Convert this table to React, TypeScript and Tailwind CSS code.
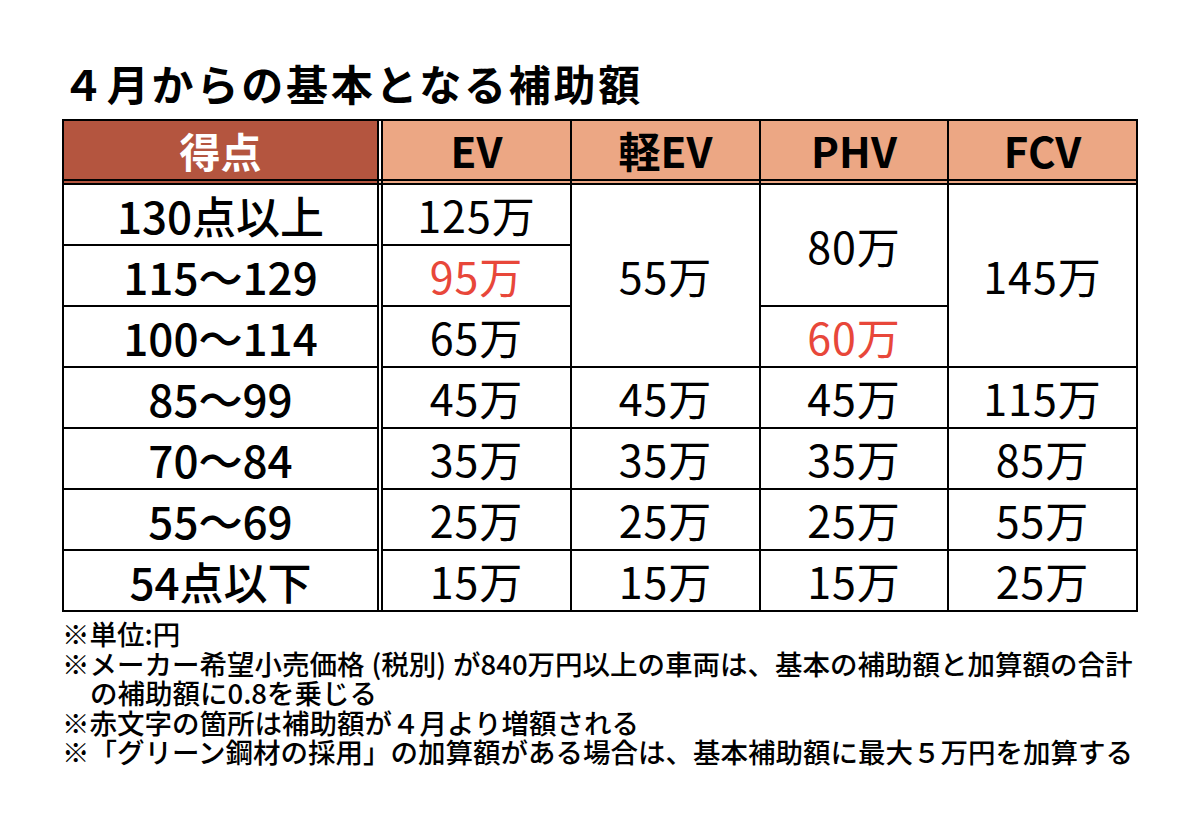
const cell = "bg-white flex items-center justify-center";
const val = "text-[43px] leading-none tracking-[1px] text-black";
const red = "text-[43px] leading-none tracking-[1px] text-[#e8473a]";
const label = "text-[44px] leading-none font-medium text-black";

const simpleRows = [
  { label: "85〜99", ev: "45万", kei: "45万", phv: "45万", fcv: "115万" },
  { label: "70〜84", ev: "35万", kei: "35万", phv: "35万", fcv: "85万" },
  { label: "55〜69", ev: "25万", kei: "25万", phv: "25万", fcv: "55万" },
  { label: "54点以下", ev: "15万", kei: "15万", phv: "15万", fcv: "25万" },
];

export default function App() {
  return (
    <div className="w-[1201px] h-[828px] bg-white pt-[62px] pl-[62px] font-['Noto_Sans_CJK_JP',sans-serif] text-black">
      {/* Title */}
      <h1 className="h-[42px] text-[42px] leading-[42px] font-bold tracking-[2.8px] mb-[15px] whitespace-nowrap">
        ４月からの基本となる補助額
      </h1>

      {/* Table */}
      <div className="w-[1076px] bg-black p-[2px] grid gap-[2px] grid-cols-[313px_2px_187px_187px_186px_187px] grid-rows-[58px_2px_repeat(7,59px)]">
        {/* header */}
        <div className="bg-[#b4553f] flex items-center justify-center text-white text-[41px] font-bold leading-none">
          得点
        </div>
        <div className="bg-white" />
        {["EV", "軽EV", "PHV", "FCV"].map((h) => (
          <div
            key={h}
            className="bg-[#eca784] flex items-center justify-center text-[42px] font-bold leading-none"
          >
            {h}
          </div>
        ))}

        {/* spacer row */}
        <div className="bg-[#b4553f]" />
        <div className="bg-[#f3c9b3]" />
        <div className="bg-[#eca784]" />
        <div className="bg-[#eca784]" />
        <div className="bg-[#eca784]" />
        <div className="bg-[#eca784]" />

        {/* labels */}
        <div className={`${cell} col-start-1 row-start-3`}>
          <span className={label}>130点以上</span>
        </div>
        <div className={`${cell} col-start-1 row-start-4`}>
          <span className={label}>115〜129</span>
        </div>
        <div className={`${cell} col-start-1 row-start-5`}>
          <span className={label}>100〜114</span>
        </div>
        {simpleRows.map((r, i) => (
          <div key={r.label} className={`${cell} col-start-1`} style={{ gridRowStart: 6 + i }}>
            <span className={label}>{r.label}</span>
          </div>
        ))}

        {/* double line spacer */}
        <div className="bg-white col-start-2 row-start-3 row-span-7" />

        {/* EV */}
        <div className={`${cell} col-start-3 row-start-3`}>
          <span className={val}>125万</span>
        </div>
        <div className={`${cell} col-start-3 row-start-4`}>
          <span className={red}>95万</span>
        </div>
        <div className={`${cell} col-start-3 row-start-5`}>
          <span className={val}>65万</span>
        </div>

        {/* 軽EV */}
        <div className={`${cell} col-start-4 row-start-3 row-span-3`}>
          <span className={val}>55万</span>
        </div>

        {/* PHV */}
        <div className={`${cell} col-start-5 row-start-3 row-span-2`}>
          <span className={val}>80万</span>
        </div>
        <div className={`${cell} col-start-5 row-start-5`}>
          <span className={red}>60万</span>
        </div>

        {/* FCV */}
        <div className={`${cell} col-start-6 row-start-3 row-span-3`}>
          <span className={val}>145万</span>
        </div>

        {simpleRows.map((r, i) =>
          [r.ev, r.kei, r.phv, r.fcv].map((v, j) => (
            <div
              key={`${i}-${j}`}
              className={cell}
              style={{ gridRowStart: 6 + i, gridColumnStart: 3 + j }}
            >
              <span className={val}>{v}</span>
            </div>
          ))
        )}
      </div>

      {/* Notes */}
      <div className="mt-[7px] text-[27.5px] leading-[29.5px] font-medium whitespace-nowrap">
        <div>※単位:円</div>
        <div>
          ※メーカー希望小売価格<span className="pl-[7px]">(</span>税別<span className="pr-[7px]">)</span>が840万円以上の車両は、基本の補助額と加算額の合計
        </div>
        <div className="pl-[28px]">の補助額に0.8を乗じる</div>
        <div>※赤文字の箇所は補助額が４月より増額される</div>
        <div>※「グリーン鋼材の採用」の加算額がある場合は、基本補助額に最大５万円を加算する</div>
      </div>
    </div>
  );
}
